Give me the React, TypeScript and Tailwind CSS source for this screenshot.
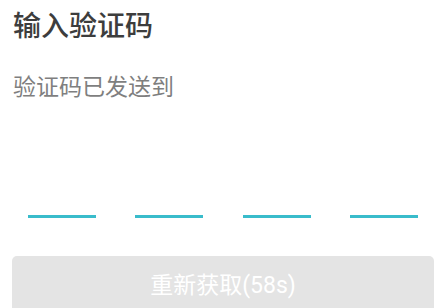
import React from 'react';

const VerifyCodePage: React.FC = () => {
    const slots = [0, 1, 2, 3];
    return (
        <div className="w-[446px] h-[308px] bg-white overflow-hidden font-['Noto_Sans_CJK_SC',sans-serif]">
            <div className="px-[13px] pt-[10px]">
                <h1 className="text-[28px] leading-[28px] font-medium text-[#3d3d3d]">输入验证码</h1>
                <p className="mt-[36px] text-[23px] leading-[23px] text-[#7f7f7f]">验证码已发送到</p>
            </div>
            <div className="mt-[118px] px-[28px] flex justify-between">
                {slots.map(i => (
                    <div key={i} className="w-[68px] h-[3px] bg-[#39bccb]"></div>
                ))}
            </div>
            <div className="mt-[38px] px-[12px]">
                <button className="w-full h-[58px] rounded-[5px] bg-[#e4e4e4] text-white text-[23px] leading-none font-['Roboto','Noto_Sans_CJK_SC',sans-serif]">
                    重新获取(58s)
                </button>
            </div>
        </div>
    );
};

export default VerifyCodePage;
